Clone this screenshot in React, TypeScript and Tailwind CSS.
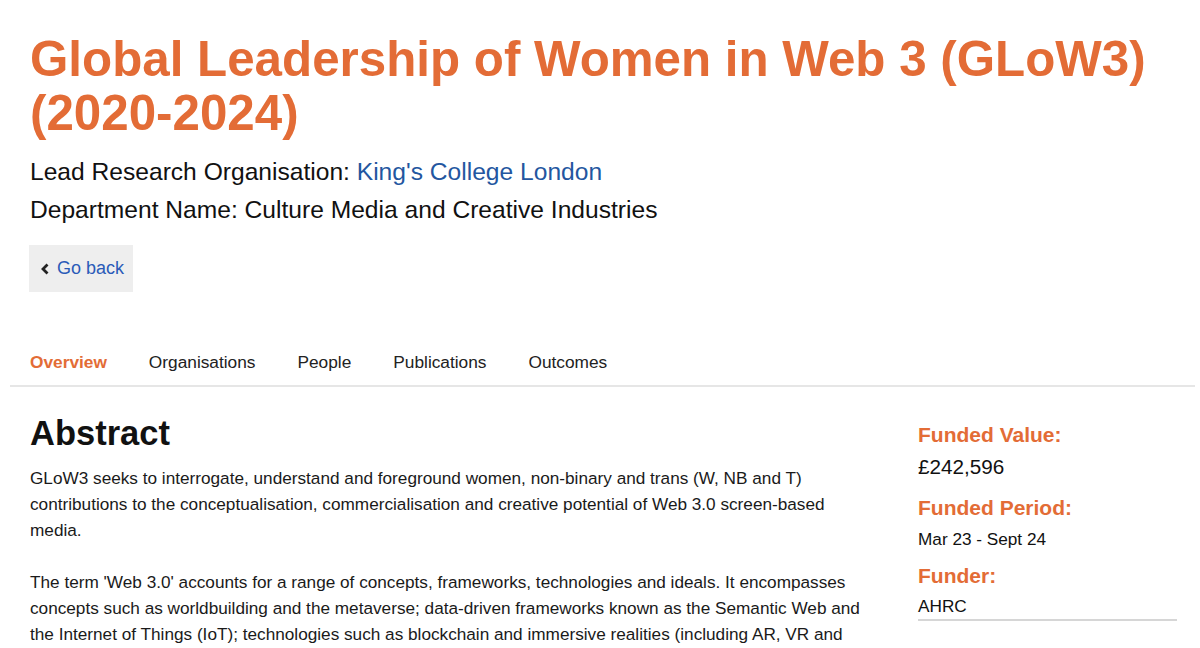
import React from "react";

export default function App() {
  return (
    <div className="w-[1200px] h-[648px] overflow-hidden bg-white font-['Liberation_Sans',Arial,sans-serif] text-[#111]">
      <div className="pl-[30px] pt-[32px]">
        <h1 className="text-[49.3px] leading-[54px] font-bold text-[#e36c36]">
          Global Leadership of Women in Web 3 (GLoW3)
          <br />
          (2020-2024)
        </h1>
        <div className="mt-[13px] text-[24.6px] leading-[38px]">
          <div>
            Lead Research Organisation: <span className="text-[#2356a0]">King's College London</span>
          </div>
          <div>Department Name: Culture Media and Creative Industries</div>
        </div>
        <div className="mt-[16px] ml-[-1px] w-[104px] h-[47px] bg-[#eeeeee] flex items-center pl-[11px] gap-[7px]">
          <svg width="10" height="12" viewBox="0 0 10 12">
            <path d="M7.5 1.5 L3 6 L7.5 10.5" stroke="#222" strokeWidth="2.8" fill="none" />
          </svg>
          <span className="text-[18px] text-[#2a5bb8]">Go back</span>
        </div>
      </div>
      <div className="mt-[60px] ml-[10px] mr-[5px] border-b-2 border-[#e6e6e6] flex gap-[42px] pl-[20px] pb-[13px] text-[17.3px] leading-[20px] text-[#222]">
        <span className="font-bold text-[#e36c36]">Overview</span>
        <span>Organisations</span>
        <span>People</span>
        <span>Publications</span>
        <span>Outcomes</span>
      </div>
      <div className="flex pl-[30px] pt-[26px]">
        <div className="w-[845px]">
          <h2 className="text-[34.5px] leading-[40px] font-bold text-[#111]">Abstract</h2>
          <div className="mt-[12px] text-[17.2px] leading-[26px] text-[#1a1a1a]">
            <p>
              GLoW3 seeks to interrogate, understand and foreground women, non-binary and trans (W, NB and T) contributions to the conceptualisation, commercialisation and creative potential of Web 3.0 screen-based media.
            </p>
            <p className="mt-[26px]">
              The term 'Web 3.0' accounts for a range of concepts, frameworks, technologies and ideals. It encompasses concepts such as worldbuilding and the metaverse; data-driven frameworks known as the Semantic Web and the Internet of Things (IoT); technologies such as blockchain and immersive realities (including AR, VR and MR); and ideals such as decentralisation.
            </p>
          </div>
        </div>
        <div className="ml-[43px] w-[259px] pt-[10px]">
          <div className="text-[21px] leading-[24px] font-bold text-[#e36c36]">Funded Value:</div>
          <div className="mt-[8px] text-[20.7px] leading-[24px]">£242,596</div>
          <div className="mt-[17px] text-[21px] leading-[24px] font-bold text-[#e36c36]">Funded Period:</div>
          <div className="mt-[7px] text-[17.2px] leading-[24px]">Mar 23 - Sept 24</div>
          <div className="mt-[13px] text-[21px] leading-[24px] font-bold text-[#e36c36]">Funder:</div>
          <div className="mt-[6px] pb-[1px] text-[17.2px] leading-[24px] border-b-2 border-[#d6d6d6]">AHRC</div>
        </div>
      </div>
    </div>
  );
}
